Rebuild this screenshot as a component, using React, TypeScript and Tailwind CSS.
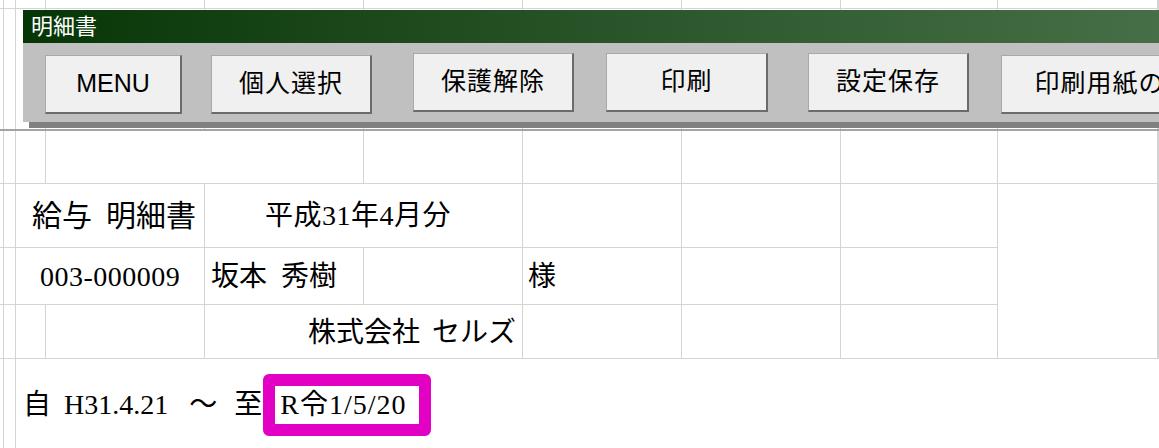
const cols = "grid grid-cols-[4px_12px_30px_159px_159px_159px_159px_159px_157px_160px_1fr]";
const line = "border-[#d4d4d4]";
const btnBase =
  "flex h-[59px] shrink-0 items-center justify-center whitespace-nowrap bg-[#f0f0f0] border border-[#a9a9a9] border-r-2 border-b-2 border-r-[#6b6b6b] border-b-[#6b6b6b] text-[25px] text-black";

function Toolbar() {
  return (
    <div className="absolute left-[23px] top-[10px] w-[1200px] shadow-[6px_6px_0_#808080] font-['Liberation_Sans','Noto_Sans_CJK_JP',sans-serif]">
      <div className="flex h-[33px] items-center bg-gradient-to-r from-[#063606] via-[#2a552a] to-[#4a724a] pl-[8px] text-[22px] text-white">
        明細書
      </div>
      <div className="flex h-[79px] items-start bg-[#c0c0c0] pt-[10px]">
        <div className={`${btnBase} ml-[22px] mt-[2px] w-[137px] text-[23px]`}>MENU</div>
        <div className={`${btnBase} ml-[29px] mt-[2px] w-[161px] tracking-[1px]`}>個人選択</div>
        <div className={`${btnBase} ml-[41px] w-[161px] tracking-[1px]`}>保護解除</div>
        <div className={`${btnBase} ml-[32px] w-[162px] tracking-[1px]`}>印刷</div>
        <div className={`${btnBase} ml-[40px] w-[161px] tracking-[1px]`}>設定保存</div>
        <div className={`${btnBase} ml-[32px] mt-[2px] w-[250px] tracking-[1px]`}>印刷用紙の設定</div>
      </div>
    </div>
  );
}

function TopPane() {
  const c = Array.from({ length: 11 });
  return (
    <div className={`${cols} h-[129px] grid-rows-[9px_1fr]`}>
      {c.map((_, i) => (
        <div key={`a${i}`} className={`border-r border-b ${line}`} />
      ))}
      {c.map((_, i) => (
        <div key={`b${i}`} className={`border-r ${line}`} />
      ))}
    </div>
  );
}

export default function App() {
  const cell = `border-r border-b ${line}`;
  return (
    <div className="relative h-[448px] w-[1159px] overflow-hidden bg-white text-black">
      <TopPane />
      <div className="h-[2px] bg-[#a3a3a3]" />

      <div
        className={`${cols} h-[317px] grid-rows-[53px_64px_57px_54px_1fr] font-['Liberation_Serif','Noto_Sans_CJK_JP',serif] text-[28px] leading-none`}
      >
        {/* row 1 */}
        <div className={cell} />
        <div className={cell} />
        <div className={cell} />
        <div className={`${cell} col-span-2`} />
        <div className={cell} />
        <div className={cell} />
        <div className={cell} />
        <div className={cell} />
        <div className={cell} />
        <div className={cell} />

        {/* row 2 */}
        <div className={cell} />
        <div className={cell} />
        <div className={`${cell} col-span-2 flex items-center pl-[16px] text-[30px]`}>
          給与<span className="ml-[14px]">明細書</span>
        </div>
        <div className={`${cell} col-span-2 flex items-center pl-[60px] tracking-[0.5px]`}>平成31年4月分</div>
        <div className={cell} />
        <div className={cell} />
        <div className={cell} />
        <div className={`${cell} row-span-3`} />
        <div className={cell} />

        {/* row 3 */}
        <div className={cell} />
        <div className={cell} />
        <div className={`${cell} col-span-2 flex items-center pl-[24px] pt-[2px] tracking-[0.5px]`}>003-000009</div>
        <div className={`${cell} flex items-center pl-[6px] pt-[2px]`}>
          坂本<span className="ml-[14px]">秀樹</span>
        </div>
        <div className={cell} />
        <div className={`${cell} flex items-center pl-[5px] pt-[2px]`}>様</div>
        <div className={cell} />
        <div className={cell} />
        <div className={cell} />

        {/* row 4 */}
        <div className={cell} />
        <div className={cell} />
        <div className={cell} />
        <div className={cell} />
        <div className={`${cell} col-span-2 flex items-center justify-end pr-[6px] pt-[2px]`}>
          株式会社<span className="ml-[12px]">セルズ</span>
        </div>
        <div className={cell} />
        <div className={cell} />
        <div className={cell} />
        <div className={cell} />

        {/* row 5 */}
        <div className={`border-r ${line}`} />
        <div className={`border-r ${line}`} />
        <div className="col-span-9 flex items-start pl-[7px] pt-[15px]">
          <div className="flex h-[62px] items-center">
            <span>自</span>
            <span className="ml-[13px]">H31.4.21</span>
            <span className="ml-[21px]">〜</span>
            <span className="ml-[17px]">至</span>
          </div>
          <div className="ml-[1px] flex h-[62px] w-[168px] items-center rounded-[6px] border-[12px] border-[#e100c4] pl-[5px] tracking-[1px]">
            R令1/5/20
          </div>
        </div>
      </div>

      <Toolbar />
    </div>
  );
}
